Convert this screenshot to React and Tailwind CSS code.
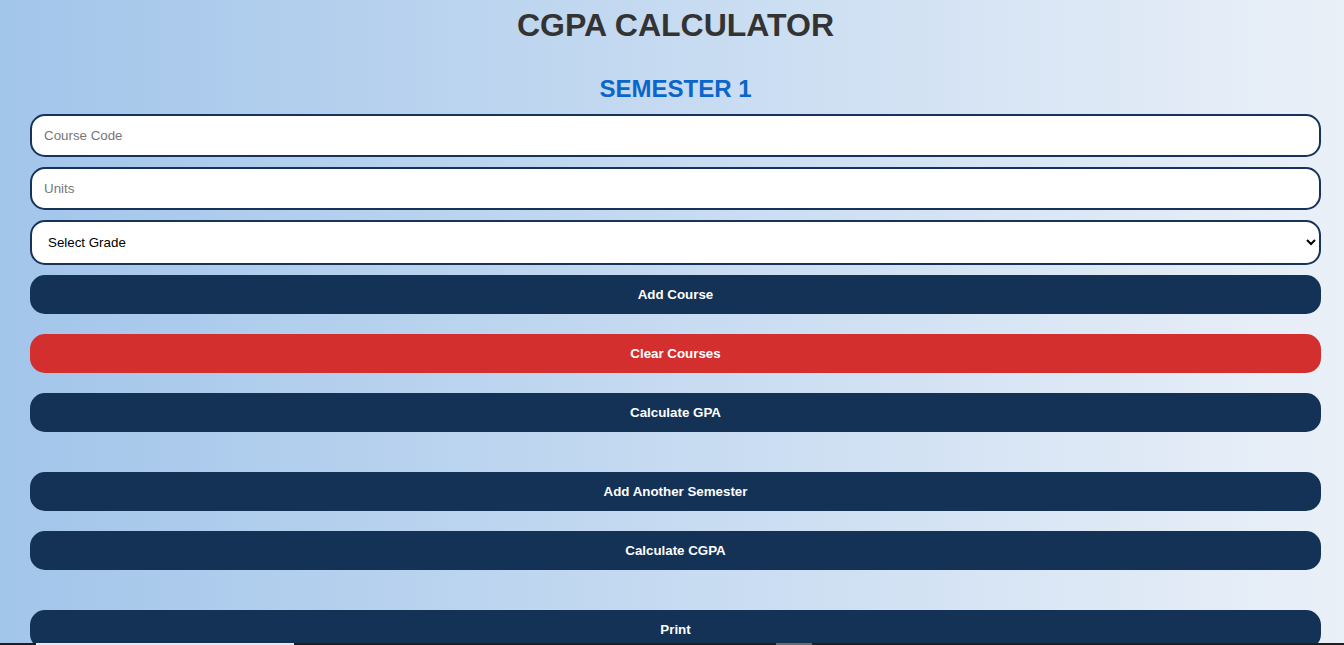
import React from "react";

const btn =
  "block w-full h-[39px] rounded-[15px] text-white font-bold text-[13.333px] leading-[15px] text-center";

export default function App() {
  return (
    <div
      className="min-h-[645px] bg-[linear-gradient(to_right,#a2c5ea,#eaf0f8)] pb-4"
      style={{ fontFamily: '"Liberation Sans", Arial, sans-serif' }}
    >
      <div className="ml-[30px] mr-[23px] flex flex-col">
        <h1 className="text-[32px] leading-[37px] font-bold text-[#333333] text-center pt-[7px]">
          CGPA CALCULATOR
        </h1>
        <h2 className="text-[24px] leading-[28px] font-bold text-[#0b66c9] text-center mt-[31px] mb-[11px]">
          SEMESTER 1
        </h2>
        <div className="flex flex-col gap-[10px]">
          <input
            placeholder="Course Code"
            className="h-[43px] w-full rounded-[15px] border-2 border-[#17335a] bg-white px-[12px] text-[13.333px] text-black placeholder:text-[#767676] outline-none"
          />
          <input
            placeholder="Units"
            className="h-[43px] w-full rounded-[15px] border-2 border-[#17335a] bg-white px-[12px] text-[13.333px] text-black placeholder:text-[#767676] outline-none"
          />
          <select
            defaultValue=""
            className="h-[45px] w-full rounded-[15px] border-2 border-[#17335a] bg-white px-[12px] text-[13.333px] text-black outline-none"
          >
            <option value="">Select Grade</option>
            <option value="A">A</option>
            <option value="B">B</option>
            <option value="C">C</option>
            <option value="D">D</option>
            <option value="E">E</option>
            <option value="F">F</option>
          </select>
        </div>
        <button className={`${btn} bg-[#143256] mt-[10px]`}>Add Course</button>
        <button className={`${btn} bg-[#d32f2f] mt-[20px]`}>Clear Courses</button>
        <button className={`${btn} bg-[#143256] mt-[20px]`}>Calculate GPA</button>
        <button className={`${btn} bg-[#143256] mt-[40px]`}>Add Another Semester</button>
        <button className={`${btn} bg-[#143256] mt-[20px]`}>Calculate CGPA</button>
        <button className={`${btn} bg-[#143256] mt-[40px]`}>Print</button>
      </div>
      <div className="fixed left-0 right-0 bottom-0 h-[2px] bg-[#1e1e1e] flex">
        <div className="ml-[36px] w-[258px] h-full bg-[#e8e8ee]" />
        <div className="ml-[482px] w-[36px] h-full bg-[#6a6a6a]" />
      </div>
    </div>
  );
}
